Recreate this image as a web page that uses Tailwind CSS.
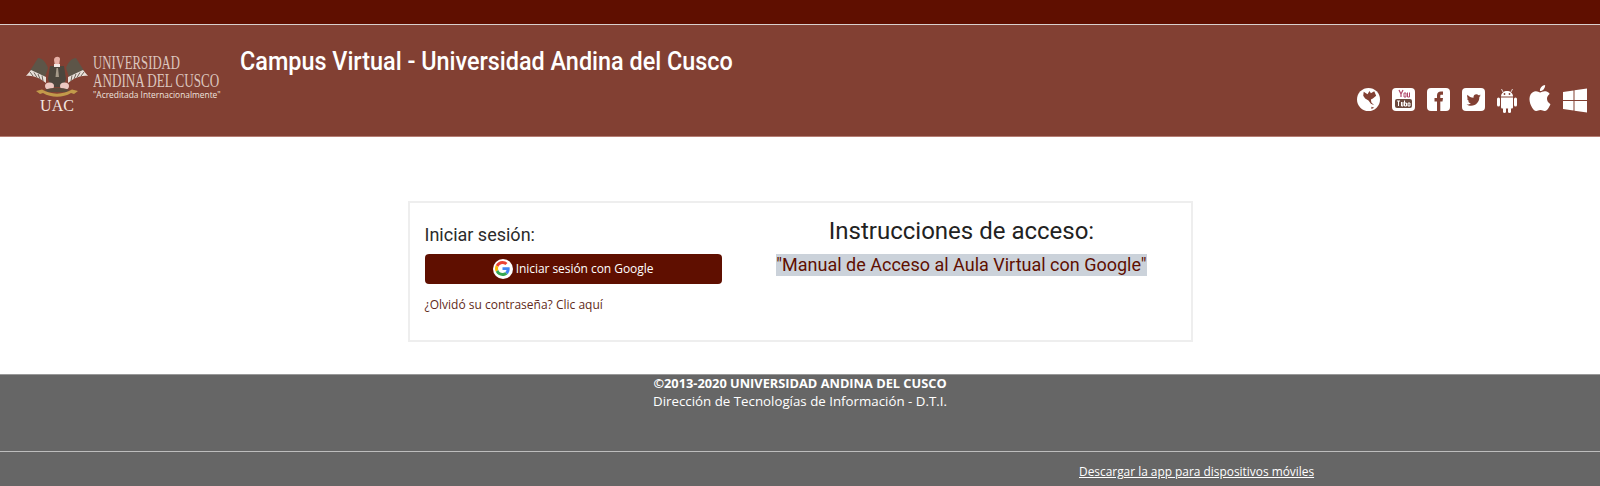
<!DOCTYPE html>
<html lang="es">
<head>
    <meta charset="UTF-8">
    <meta name="viewport" content="width=device-width, initial-scale=1.0">
    <script src="https://cdn.jsdelivr.net/npm/@tailwindcss/browser@4"></script>
    <title>Campus Virtual - Universidad Andina del Cusco</title>
</head>
<body class="bg-white font-['Roboto',sans-serif] h-[486px] overflow-hidden flex flex-col">

    <!-- barra superior -->
    <div class="h-[25px] bg-[#5f0f00] border-b border-[#d9cfcd]"></div>

    <!-- cabecera -->
    <header class="h-[112px] bg-[#824033] border-b border-[#b57d73] flex">
        <div class="w-[240px] pl-[25px] pt-[30px] flex items-start">
            <div class="w-[64px] flex flex-col items-center">
                <svg viewBox="0 0 64 44" class="w-[64px] h-[44px]">
                    <defs>
                        <g id="ala">
                            <path d="M23 13 C21 7 17 3 13 3 C10 8 7 12 5 16 L19 25Z" fill="#5d5548"/>
                            <path d="M1 21 L6 15 L21 22 L21 28 C15 23 8 20 1 21Z" fill="#e9e0da"/>
                            <path d="M5 17 L8 21 M9 17.500 L12 22.500 M13 19 L15 24 M17 20.500 L18 26" stroke="#6d6358" stroke-width="1"/>
                        </g>
                    </defs>
                    <use href="#ala"/>
                    <use href="#ala" transform="translate(64 0) scale(-1 1)"/>
                    <path d="M25 11 H39 L41 24 L38 32 H26 L23 24Z" fill="#4c463d"/>
                    <path d="M31.500 13 L33 13 L34 22 L30.500 22Z" fill="#a59a8a"/>
                    <path d="M29 5 C29 1 35 1 35 4 L34 11 H30Z" fill="#e6b0a6"/>
                    <path d="M29 9 H35 V12 H29Z" fill="#f2e8e4"/>
                    <ellipse cx="24.500" cy="31" rx="4.500" ry="3.500" fill="#ecc7c0"/>
                    <ellipse cx="39.500" cy="31" rx="4.500" ry="3.500" fill="#ecc7c0"/>
                    <path d="M20 35 C26 32 38 32 44 35 L42 37 H22Z" fill="#5a4a3c"/>
                    <path d="M11 36 L17 34.500 C26 40 38 40 47 34.500 L53 36 L49 39 L46 38 C38 43 26 43 18 38 L15 39Z" fill="#c29a4a"/>
                </svg>
                <span class="font-['Liberation_Serif',serif] text-[16px] leading-[13px] text-[#f3e6e0]">UAC</span>
            </div>
            <div class="ml-[4px] -mt-[2px] font-['Liberation_Serif',serif] text-[#dcc6bf]">
                <div class="text-[19px] leading-[19px] whitespace-nowrap scale-x-[.67] origin-left">UNIVERSIDAD</div>
                <div class="text-[19px] leading-[18px] whitespace-nowrap scale-x-[.69] origin-left">ANDINA DEL CUSCO</div>
                <div class="font-['Open_Sans',sans-serif] text-[8.4px] leading-[10px] whitespace-nowrap text-[#efe3df]">"Acreditada Internacionalmente"</div>
            </div>
        </div>
        <h1 class="text-[26px] font-medium leading-[30px] pt-[21px] text-white whitespace-nowrap scale-x-[.9] origin-left">Campus Virtual - Universidad Andina del Cusco</h1>
        <div class="ml-auto pr-[13px] pt-[63px] flex items-start gap-[12px]">
            <!-- web -->
            <svg viewBox="0 0 24 24" class="w-[23px] h-[23px]"><circle cx="12" cy="12" r="12" fill="#fff"/><path d="M7 4 L11 6.500 L13 3 L14.500 5.500 L18 3.500 L20 8 L16.500 11 L14.500 12 L15 15 L18 18 L14.500 16.500 L12 13 L8.500 11 L6.500 8Z M15 19.500 L18 20.500 L15 22Z" fill="#824033"/></svg>
            <!-- youtube -->
            <svg viewBox="0 0 23 23" class="w-[23px] h-[23px]">
                <rect width="23" height="23" rx="4" fill="#fff"/>
                <path d="M7 2 L9 6 L9 9 M11 2 L9 6" stroke="#b0476a" stroke-width="1.2" fill="none"/>
                <path d="M12 5 H14 V9 H12Z M15.500 4.500 V9 H17.500 V4.500" stroke="#b0476a" stroke-width="1" fill="none"/>
                <rect x="3" y="11" width="17" height="9" rx="2" fill="#6b4a3f"/>
                <path d="M5 13 H8 M6.500 13 V18 M9.500 14 V18 H11 V14 M12.500 12.500 V18 H14.500 V15 H12.500 M16 15 H18 V18 H16Z" stroke="#fff" stroke-width="1" fill="none"/>
            </svg>
            <!-- facebook -->
            <svg viewBox="0 0 23 23" class="w-[23px] h-[23px]"><rect width="23" height="23" rx="4" fill="#fff"/><path d="M10 23 V13.500 H7.500 V10 H10 V7.500 C10 5 11.500 3.500 14 3.500 H16 V6.800 H14.500 C13.500 6.800 13.300 7.300 13.300 8 V10 H16 L15.500 13.500 H13.300 V23Z" fill="#824033"/></svg>
            <!-- twitter -->
            <svg viewBox="0 0 23 23" class="w-[23px] h-[23px]"><rect width="23" height="23" rx="4" fill="#fff"/><g transform="translate(3.500 3.500) scale(.68)" fill="#824033"><path d="M22.460,6C21.690,6.350 20.860,6.580 20,6.690C20.880,6.160 21.560,5.320 21.880,4.310C21.050,4.810 20.130,5.160 19.160,5.360C18.370,4.500 17.260,4 16,4C13.650,4 11.730,5.920 11.730,8.290C11.730,8.630 11.770,8.960 11.840,9.270C8.280,9.090 5.110,7.380 3,4.790C2.630,5.420 2.420,6.160 2.420,6.940C2.420,8.430 3.170,9.750 4.330,10.500C3.620,10.500 2.960,10.300 2.380,10C2.380,10 2.380,10 2.380,10.030C2.380,12.110 3.860,13.850 5.820,14.240C5.460,14.340 5.080,14.390 4.690,14.390C4.420,14.390 4.150,14.360 3.890,14.310C4.430,16 6,17.260 7.890,17.290C6.430,18.440 4.580,19.130 2.560,19.130C2.220,19.130 1.880,19.110 1.540,19.070C3.440,20.290 5.700,21 8.120,21C16,21 20.330,14.460 20.330,8.790C20.330,8.600 20.330,8.420 20.320,8.230C21.160,7.630 21.880,6.870 22.460,6Z"/></g></svg>
            <!-- android -->
            <svg viewBox="0 0 22 25" class="w-[22px] h-[25px] -ml-[1px]" fill="#fff"><path d="M5 8.500 C5 5 8 3 11 3 C14 3 17 5 17 8.500Z"/><path d="M7 4 L5.500 1 M15 4 L16.500 1" stroke="#fff" stroke-width=".8"/><circle cx="8.500" cy="6" r=".9" fill="#824033"/><circle cx="13.500" cy="6" r=".9" fill="#824033"/><path d="M5 9.500 H17 V19 C17 20 16.500 20.500 15.500 20.500 H6.500 C5.500 20.500 5 20 5 19Z"/><rect x="1" y="9.500" width="3" height="9" rx="1.500"/><rect x="18" y="9.500" width="3" height="9" rx="1.500"/><rect x="7" y="19" width="3" height="6" rx="1.500"/><rect x="12" y="19" width="3" height="6" rx="1.500"/></svg>
            <!-- apple -->
            <svg viewBox="3.500 2 17 20" class="w-[22px] h-[26px] -mt-[3px] -ml-[1px]" fill="#fff"><path d="M18.710,19.500C17.880,20.740 17,21.950 15.660,21.970C14.320,22 13.890,21.180 12.370,21.180C10.840,21.180 10.370,21.950 9.100,22C7.790,22.050 6.800,20.680 5.960,19.470C4.250,17 2.940,12.450 4.700,9.390C5.570,7.870 7.130,6.910 8.820,6.880C10.100,6.860 11.320,7.750 12.110,7.750C12.890,7.750 14.370,6.680 15.920,6.840C16.570,6.870 18.390,7.100 19.560,8.820C19.470,8.880 17.390,10.100 17.410,12.630C17.440,15.650 20.060,16.660 20.090,16.670C20.060,16.740 19.670,18.110 18.710,19.500M13,3.500C13.730,2.670 14.940,2.040 15.940,2C16.070,3.170 15.600,4.350 14.900,5.190C14.210,6.040 13.070,6.700 11.950,6.610C11.800,5.460 12.360,4.260 13,3.500Z"/></svg>
            <!-- windows -->
            <svg viewBox="0 0 24 24" class="w-[24px] h-[25px]" fill="#fff"><path d="M0 3.500 L10.500 2 V11.500 H0Z M11.500 1.800 L24 0 V11.500 H11.500Z M0 12.500 H10.500 V22 L0 20.500Z M11.500 12.500 H24 V24 L11.500 22.200Z"/></svg>
        </div>
    </header>

    <!-- contenido -->
    <main class="h-[237px] flex justify-center pt-[64px]">
        <div class="w-[785px] h-[141px] border-2 border-[#eeeeee] flex">
            <div class="w-[350px] pl-[15px] pt-[21px]">
                <h2 class="text-[18px] leading-[22px] text-[#2b2b2b]">Iniciar sesión:</h2>
                <a href="#" class="mt-[8px] w-[297px] h-[30px] rounded-[4px] bg-[#5f0f00] flex items-center justify-center gap-[3px] pb-[1px] font-['Open_Sans',sans-serif] font-medium text-[12px] tracking-[-.05px] text-white">
                    <span class="w-[20px] h-[20px] rounded-full bg-white flex items-center justify-center">
                        <svg viewBox="0 0 48 48" class="w-[15px] h-[15px]">
                            <path fill="#EA4335" d="M24 9.500c3.540 0 6.710 1.220 9.210 3.600l6.850-6.850C35.900 2.380 30.470 0 24 0 14.620 0 6.510 5.380 2.560 13.220l7.980 6.190C12.430 13.720 17.740 9.500 24 9.500z"/>
                            <path fill="#4285F4" d="M46.980 24.550c0-1.570-.15-3.090-.38-4.550H24v9.020h12.940c-.58 2.960-2.260 5.480-4.780 7.180l7.730 6c4.510-4.180 7.090-10.360 7.090-17.650z"/>
                            <path fill="#FBBC05" d="M10.530 28.590c-.48-1.450-.76-2.990-.76-4.590s.27-3.140.76-4.590l-7.980-6.190C.92 16.460 0 20.120 0 24c0 3.880.92 7.540 2.560 10.780l7.970-6.190z"/>
                            <path fill="#34A853" d="M24 48c6.480 0 11.930-2.130 15.890-5.810l-7.730-6c-2.150 1.450-4.920 2.300-8.160 2.300-6.260 0-11.570-4.220-13.470-9.910l-7.980 6.190C6.510 42.620 14.620 48 24 48z"/>
                        </svg>
                    </span>
                    Iniciar sesión con Google
                </a>
                <a href="#" class="block mt-[13px] font-['Open_Sans',sans-serif] text-[12px] leading-[16px] text-[#5f2a20]">¿Olvidó su contraseña? Clic aquí</a>
            </div>
            <div class="w-[404px] pt-[13px] text-center">
                <h2 class="text-[24px] leading-[30px] text-[#222]">Instrucciones de acceso:</h2>
                <a href="#" class="inline-block mt-[8px] bg-[#cbd2da] text-[18px] leading-[22px] text-[#5f0f00]">"Manual de Acceso al Aula Virtual con Google"</a>
            </div>
        </div>
    </main>

    <!-- pie -->
    <footer class="flex-1 bg-[#666666] border-t border-[#999] font-['Open_Sans',sans-serif] text-[14px] text-white flex flex-col">
        <div class="h-[78px] border-b border-[#bdbdbd] text-center leading-[18px] -mt-[1px]">
            <p class="font-bold text-[12.8px]">©2013-2020 UNIVERSIDAD ANDINA DEL CUSCO</p>
            <p class="text-[13.3px]">Dirección de Tecnologías de Información - D.T.I.</p>
        </div>
        <div class="pl-[1079px] pt-[8px]">
            <a href="#" class="text-[11.9px] leading-[16px] underline">Descargar la app para dispositivos móviles</a>
        </div>
    </footer>

</body>
</html>
